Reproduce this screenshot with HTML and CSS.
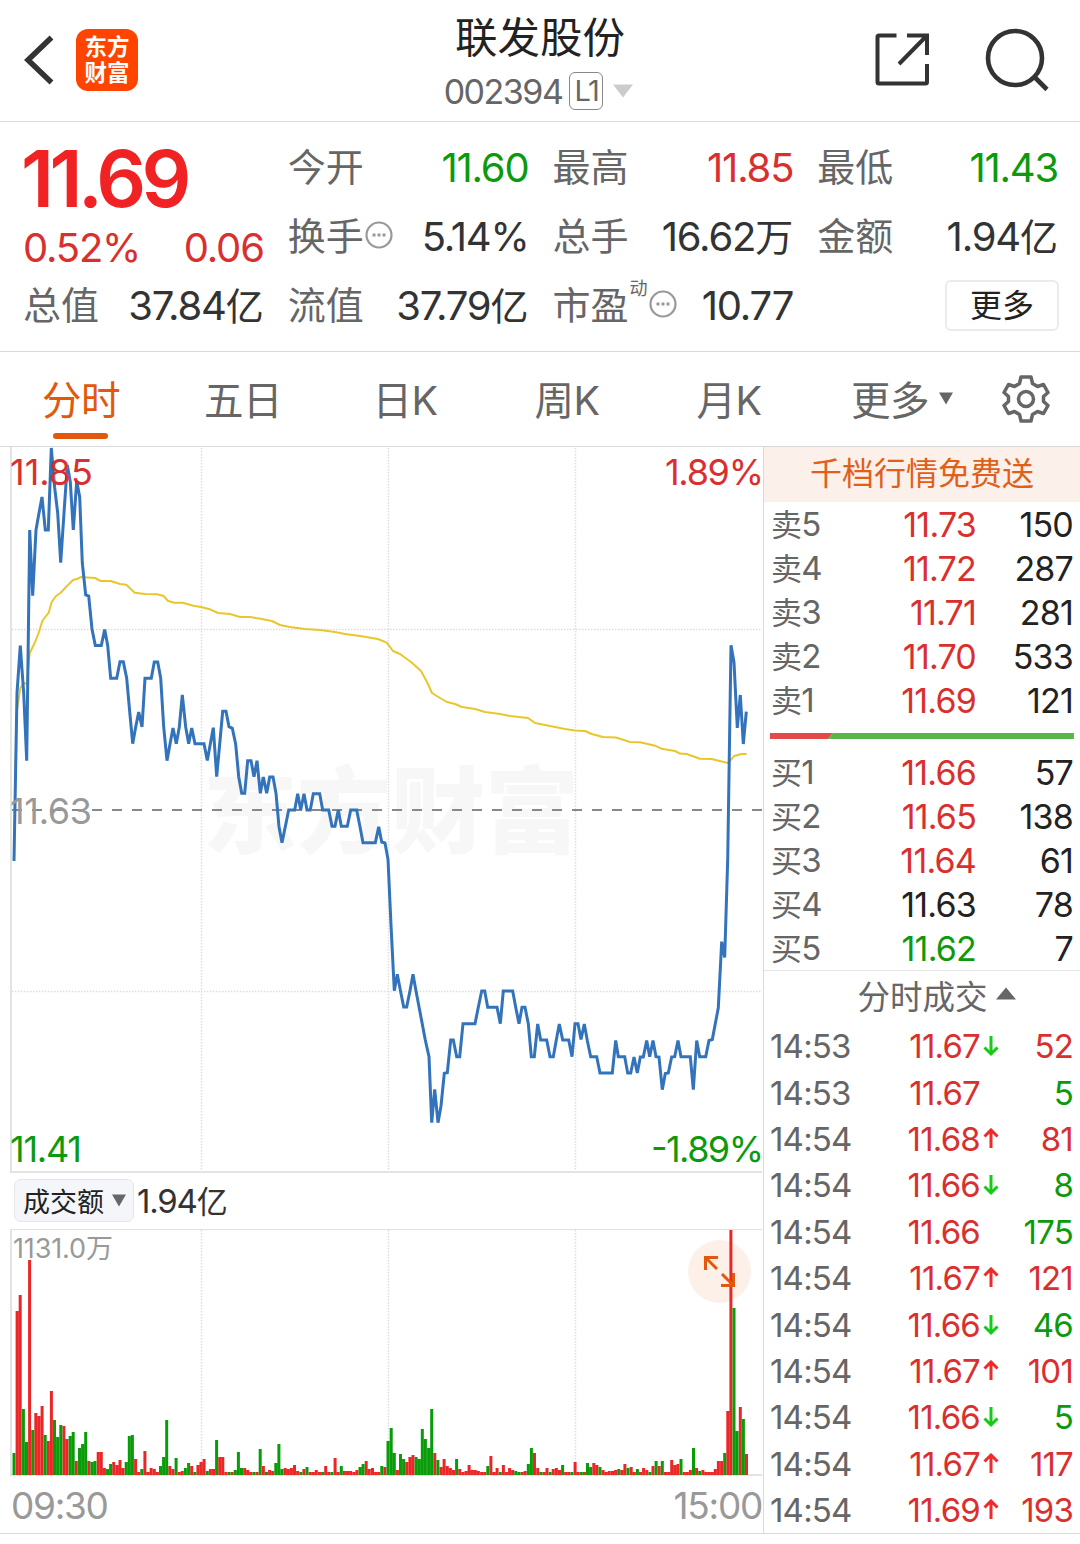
FILE: index.html
```html
<!DOCTYPE html>
<html lang="zh-CN">
<head>
<meta charset="utf-8">
<title>联发股份 002394</title>
<link rel="stylesheet" href="styles.css">
</head>
<body>
<header class="topbar">
  <div class="side">
    <svg class="back" width="34" height="52" viewBox="0 0 34 52"><path d="M28.500 3.500 5 26 28.500 48.500" fill="none" stroke="#333" stroke-width="5.500"/></svg>
    <div class="logo"><span>东方</span><span>财富</span></div>
  </div>
  <div class="heading">
    <h1>联发股份</h1>
    <div class="code"><span class="num">002394</span><span class="level">L1</span><svg width="20" height="14" viewBox="0 0 20 14"><path d="M0 0.500H20L10 13.500Z" fill="#ccc"/></svg></div>
  </div>
  <div class="side actions">
    <svg width="56" height="56" viewBox="0 0 56 56"><g fill="none" stroke="#333" stroke-width="4"><path d="M22.500 4.500H5Q3.500 4.500 3.500 6V51Q3.500 52.500 5 52.500H51.500Q53 52.500 53 51V33"/><path d="M33 4.500H53V24M53 4.500 25 33"/></g></svg>
    <svg width="66" height="66" viewBox="0 0 66 66"><g fill="none" stroke="#333" stroke-width="4.600"><circle cx="32" cy="32" r="27"/><path d="M51 50.500 64 63.500"/></g></svg>
  </div>
</header>

<section class="quote">
  <div class="price up">11.69</div>
  <div class="change up"><span>0.52%</span><span>0.06</span></div>
  <div class="cell a"><label>今开</label><b class="down">11.60</b></div>
  <div class="cell b"><label>最高</label><b class="up">11.85</b></div>
  <div class="cell c"><label>最低</label><b class="down">11.43</b></div>
  <div class="cell a r2"><label>换手</label><svg class="dots" width="28" height="30" viewBox="0 0 28 30"><circle cx="14" cy="15" r="12.500"/><path d="M7.500 15h3M12.500 15h3M17.500 15h3"/></svg><b class="wide">5.14%</b></div>
  <div class="cell b r2"><label>总手</label><b>16.62<i>万</i></b></div>
  <div class="cell c r2"><label>金额</label><b>1.94<i>亿</i></b></div>
  <div class="cell z r3"><label>总值</label><b>37.84<i>亿</i></b></div>
  <div class="cell a r3"><label>流值</label><b>37.79<i>亿</i></b></div>
  <div class="cell b r3"><label>市盈</label><sup>动</sup><svg class="dots" width="28" height="30" viewBox="0 0 28 30"><circle cx="14" cy="15" r="12.500"/><path d="M7.500 15h3M12.500 15h3M17.500 15h3"/></svg><b>10.77</b></div>
  <div class="cell c r3"><button class="more">更多</button></div>
</section>

<nav class="tabs">
  <a class="active">分时</a><a>五日</a><a>日K</a><a>周K</a><a>月K</a>
  <a class="drop">更多<svg width="14" height="13" viewBox="0 0 14 13"><path d="M0 0.500H14L7 12.500Z" fill="#666"/></svg></a>
  <a class="gear"><svg width="50" height="50" viewBox="0 0 50 50"><g fill="none" stroke="#666" stroke-width="3.500" stroke-linejoin="round"><path d="M20 3H30L31.500 9.500 36.500 12.500 42.500 10.500 47 18.500 42.500 22.500V27.500L47 31.500 42.500 39.500 36.500 37.500 31.500 40.500 30 47H20L18.500 40.500 13.500 37.500 7.500 39.500 3 31.500 7.500 27.500V22.500L3 18.500 7.500 10.500 13.500 12.500 18.500 9.500Z"/><circle cx="25" cy="25" r="7.500"/></g></svg></a>
</nav>

<main class="body">
  <section class="charts">
    <svg class="intraday" width="763" height="726" viewBox="0 447 763 726">
      <text class="mark" x="203" y="846" textLength="376" lengthAdjust="spacingAndGlyphs">东方财富</text>
      <g class="grid"><path d="M201.500 448V1171M388.500 448V1171M575.500 448V1171M12 629.500H762M12 991.500H762"/></g>
      <path class="frame" d="M11 447V1172H762"/>
      <path class="prev" d="M12 810H762"/>
      <polyline class="avg" points="14,858 15.500,770 17,710 20.300,688 23.700,683 26.700,684 29.700,653 34.700,643 39,632 42.300,621 45.300,617 48.700,612.700 51.700,602 56,596 60.700,592.700 67,586 73,580 77.700,578.700 81,577 95,578 100.700,581 110.700,581 120,584 126.300,584.700 134.700,592.700 145,594 157.300,594.300 163.700,596 167.700,600.700 174,602.700 182.700,602.700 193.300,605.700 201,607 210,609.300 218,613 230,614 240,617 250,617 262,619 272,621 280,625 290,627 305,629 320,630 335,632 345,634 360,636 378,639 386.700,642.700 393,651 400,654 411,662 421,671 427,682 432,693 440,698 447,702 455,704 462,707 475,709 485,712 500,714 510,716 528,718 535,723 555,727 565,729 575,730.600 585,731 591.700,734 603,737 616,737.500 630,742 640,742.300 655,745.700 661.700,748.800 675,751 680,753.600 686.700,754 700,758.800 711.700,759 727.700,763 731,759.800 734,756 741.700,754 746.500,754"/>
      <polyline class="line" points="14,861 17,693 20.300,645.500 23.700,693 26.700,760.700 29.700,530 32.700,595.700 36,530 39,513 42,497 45.300,530 48.300,530 51.300,448 54.700,488 57.700,513 60.700,562.700 64,513 67.300,465 70.300,482 73.300,530 76.700,481 79.700,497 82.300,563 85.700,595 88.700,596 92,629 95.300,645.500 101.300,645.500 104.700,629.500 107.700,645.500 110.700,678.300 116.700,678.300 120,661.700 123.300,661.700 126.700,678.300 129.700,711.700 132.700,743.700 135.700,727 138.700,712 142,727 145,678.300 151.300,678.300 154.300,662 157.700,662 160.700,678.300 163.700,727 167,760.700 170,744 173,728 176.300,743.700 179.300,727 182.300,695 185.700,727 188.700,743.700 191.700,728 195,743.700 204,743.700 207.300,760.500 210.300,744 213.300,727.700 216.700,776.700 219.700,744 222.700,711.300 226,711.300 229,726.700 232.300,728.300 235.700,744.300 238.700,776.700 241.700,793.300 244.700,793.300 247.700,760.700 251,760.700 254,776.700 257,760.700 260.300,793.300 263.300,777 266.700,793.300 269.700,777 273,777 276,793.300 279,826.700 282,842.700 285.300,826.700 288.700,810 294.700,810 297.700,793.700 300.700,810 304,793.700 307,810 310.300,810 313.300,793.700 319.700,793.700 322.700,810 328.700,810 332,826.300 335,826.300 338.300,810 341.300,826.300 347.300,826.300 350.700,810 356.700,810 360,826.700 363,842.700 375.300,842.700 378.700,826.700 381.700,842 385,843 388,859.300 391,925 394.300,990.700 397.300,974.300 400.500,991 403.700,1007 406.700,1007 410,990.700 413,974.300 416,991 419,1006.700 425.300,1040 429,1056.700 431.700,1122.700 434.700,1089.300 438,1122.700 441,1106 444.300,1073.300 447.300,1072.700 450.700,1040 453.300,1040 456.700,1056.700 459.700,1056.700 463,1023.700 475,1023.700 478.300,1007.300 481.700,991 484.700,991 487.700,1007.300 497,1007.300 500.300,1023.700 503.300,991 512.700,991 515.700,1007.300 519,1023.700 522,1007.300 525,1007.300 528.300,1023.700 531.300,1056.700 534.300,1056.700 537.700,1024 540.700,1040 546.700,1040 550,1056.700 553.300,1056.700 556.300,1040 559.300,1024 562.700,1040 568.700,1040 572,1056.700 575,1023.700 578,1023.700 581,1039.500 584.300,1024 587.300,1040.500 590.700,1056.700 596.700,1056.700 600,1073 612.300,1073 615.700,1040.500 618.300,1056.700 624.700,1056.700 627.700,1073 630.700,1073 634,1057 637.300,1073 640.300,1057 643.300,1057 646.700,1040.500 649.700,1056.700 653,1040.500 656,1056.700 659,1057 662.300,1089.700 665.300,1073.500 668.300,1073 671.700,1057 674.700,1056.700 678,1040.500 681,1056.700 690.300,1056.700 693.300,1089.700 696.700,1040.500 699.700,1056.700 705.700,1056.700 709,1040.500 712.300,1039.500 718.300,1007.800 721.700,941.700 724.700,957.500 727.700,859.400 731,645.200 734,662.400 737.300,727.800 740.300,695 743.300,744 746.300,711.600"/>
      <g class="axis">
        <text x="10" y="485" textLength="83" class="t-up">11.85</text>
        <text x="665" y="485" textLength="99" class="t-up">1.89%</text>
        <text x="10" y="824" textLength="82" class="t-mute">11.63</text>
        <text x="10" y="1162" textLength="72" class="t-down">11.41</text>
        <text x="651" y="1162" textLength="113" class="t-down">-1.89%</text>
      </g>
    </svg>
    <div class="indicator"><button class="pick">成交额<svg width="14" height="13" viewBox="0 0 14 13"><path d="M0 0.500H14L7 12.500Z" fill="#666"/></svg></button><b>1.94<i>亿</i></b></div>
    <div class="volume">
      <svg width="763" height="248" viewBox="0 1229 763 248">
        <g class="grid"><path d="M201.500 1230V1474M388.500 1230V1474M575.500 1230V1474"/></g>
        <path d="M11 1229.500H762" stroke="#e0e0e0"/>
        <path class="frame" d="M11 1229V1475H762"/>
        <text x="13" y="1258" class="vmax" textLength="100">1131.0万</text>
        <circle cx="719.500" cy="1271.500" r="31.500" fill="#fdf0e9"/>
        <path id="vol-up" fill="#eb2627"/>
        <path id="vol-down" fill="#089c08"/>
        <path d="M705.500 1270V1257.500H718M705.500 1257.500 717 1269M733.500 1273V1285.500H721M733.500 1285.500 722 1274" fill="none" stroke="#e2580c" stroke-width="3"/>
      </svg>
    </div>
    <div class="times"><span>09:30</span><span>15:00</span></div>
  </section>

  <aside class="depth">
    <div class="promo">千档行情免费送</div>
    <div class="book">
      <div><label>卖<s>5</s></label><b class="up">11.73</b><b>150</b></div>
      <div><label>卖<s>4</s></label><b class="up">11.72</b><b>287</b></div>
      <div><label>卖<s>3</s></label><b class="up">11.71</b><b>281</b></div>
      <div><label>卖<s>2</s></label><b class="up">11.70</b><b>533</b></div>
      <div><label>卖<s>1</s></label><b class="up">11.69</b><b>121</b></div>
    </div>
    <svg class="ratio" width="304" height="6" viewBox="0 0 304 6"><path d="M0 0H63L58 6H0Z" fill="#e14a48"/><path d="M63 0H304V6H58Z" fill="#5ab548"/></svg>
    <div class="book">
      <div><label>买<s>1</s></label><b class="up">11.66</b><b>57</b></div>
      <div><label>买<s>2</s></label><b class="up">11.65</b><b>138</b></div>
      <div><label>买<s>3</s></label><b class="up">11.64</b><b>61</b></div>
      <div><label>买<s>4</s></label><b>11.63</b><b>78</b></div>
      <div><label>买<s>5</s></label><b class="down">11.62</b><b>7</b></div>
    </div>
    <div class="ticks-title">分时成交<svg width="20" height="13" viewBox="0 0 20 13"><path d="M0 12.500H20L10 0.500Z" fill="#666"/></svg></div>
    <div class="ticks" id="ticks"></div>
  </aside>
</main>
<script src="app.js"></script>
</body>
</html>
```
FILE: styles.css
```css
* { box-sizing: border-box; }
body {
  margin: 0; width: 1080px; height: 1544px; background: #fff; color: #333; overflow: hidden;
  font-family: Inter, "Noto Sans CJK SC", sans-serif; font-weight: 400;
}
b, i, s, h1 { font-weight: 400; font-style: normal; text-decoration: none; margin: 0; }
i, s { line-height: 0; }
svg { display: block; flex: none; }
button { font: inherit; color: #222; margin: 0; }
.up { color: #d9302f; }
.down { color: #0c9a0c; }

.topbar { height: 122px; border-bottom: 1px solid #d9d9d9; display: grid; grid-template-columns: 300px 1fr 300px; }
.side { display: flex; align-items: center; height: 120px; padding-left: 23px; }
.logo {
  width: 62px; height: 62px; margin-left: 19px; border-radius: 12px; background: #ff4400; color: #fff;
  display: flex; flex-direction: column; align-items: center; justify-content: center; padding-bottom: 4px;
  font: 700 22.500px/26px "Noto Sans CJK SC", sans-serif;
}
.heading { display: flex; flex-direction: column; align-items: center; }
h1 { font-size: 42.500px; line-height: 60px; margin-top: 8px; color: #222; white-space: nowrap; }
.code { display: flex; align-items: center; height: 44px; margin-top: 1px; color: #666; font-size: 34px; margin-left: -3px; }
.num { letter-spacing: -1.500px; }
.level { border: 1.500px solid #888; border-radius: 6px; width: 34px; height: 38px; margin: 0 10px 0 7px; font-size: 29px; line-height: 35px; letter-spacing: -1.500px; text-align: center; }
.actions { justify-content: flex-end; gap: 53px; padding: 0 31px 3px 0; }

.quote {
  height: 230px; border-bottom: 1px solid #d9d9d9; padding: 11px 22px 0 23px;
  display: grid; grid-template-columns: repeat(4, 1fr); grid-template-rows: repeat(3, 69px); column-gap: 24px;
}
.price { grid-area: 1 / 1; font-size: 78px; font-weight: 600; line-height: 92px; letter-spacing: -4.500px; color: #f12223; margin-left: -2px; }
.change { grid-area: 2 / 1; display: flex; justify-content: space-between; font-size: 40px; line-height: 92px; letter-spacing: -1.200px; }
.cell { display: flex; align-items: center; grid-row: 1; font-size: 40px; white-space: nowrap; min-width: 0; }
.cell label { font-size: 38px; line-height: 46px; color: #666; margin-bottom: 1px; }
.cell b { margin-left: auto; letter-spacing: -1.200px; line-height: 48px; }
.cell i { font-size: 38px; letter-spacing: 0; }
.r2 { grid-row: 2; }
.r3 { grid-row: 3; }
.z { grid-column: 1; }
.a { grid-column: 2; }
.b { grid-column: 3; }
.c { grid-column: 4; }
.dots { fill: none; stroke: #999; stroke-width: 2.200; margin-left: 1px; margin-top: -4px; }
.dots path { stroke-width: 3; }
sup { font-size: 18px; line-height: 20px; align-self: flex-start; margin-top: 8px; color: #666; margin-left: 1px; }
.cell sup + .dots { margin-left: 1px; }
.more { margin-left: auto; margin-right: -1px; width: 114px; height: 51px; padding: 0; border: 2px solid #ebebeb; border-radius: 6px; background: #fff; font-size: 32px; line-height: 44px; }

.tabs { height: 95px; border-bottom: 1px solid #d9d9d9; display: grid; grid-template-columns: repeat(5, 162px) 184px 1fr; font-size: 39.500px; color: #666; }
.tabs a { display: flex; align-items: center; justify-content: center; white-space: nowrap; position: relative; height: 90px; letter-spacing: -0.500px; }
.tabs .active { color: #e2580c; }
.tabs .active::after { content: ""; position: absolute; bottom: 3px; left: 53px; width: 55px; height: 6px; border-radius: 3px; background: #e2580c; }
.drop svg { margin-left: 10px; margin-top: 2px; }
.tabs .gear { justify-content: flex-start; padding-left: 7px; height: 94px; }

.body { display: grid; grid-template-columns: 763px 1fr; height: 1087px; border-bottom: 1px solid #d9d9d9; }
.grid path { fill: none; stroke: #ddd; stroke-width: 1.500; stroke-dasharray: 1.500 1.500; }
.frame { fill: none; stroke: #e3e3e3; stroke-width: 2; }
.prev { fill: none; stroke: #888; stroke-width: 2; stroke-dasharray: 10 10; }
.avg, .line { fill: none; stroke-linejoin: round; }
.avg { stroke: #e9c72c; stroke-width: 2; }
.line { stroke: #3373bb; stroke-width: 3; stroke-linejoin: miter; stroke-miterlimit: 1.500; }
.mark { font: 900 94px "Noto Sans CJK SC", sans-serif; fill: #f7f7f7; }
.axis text { font-size: 36px; }
.t-up { fill: #d9302f; }
.t-down { fill: #0c9a0c; }
.t-mute { fill: #999; }
.vmax { font-size: 27px; fill: #999; }
.indicator { height: 56px; display: flex; align-items: center; padding: 0 0 1px 14px; font-size: 33px; }
.indicator b { margin-left: 3px; letter-spacing: -1.200px; line-height: 40px; }
.indicator i { font-size: 31px; }
.pick { width: 120px; height: 43px; border: 1px solid #e4e6e9; border-radius: 7px; background: #f5f6f9; padding: 0 7px 0 8px; display: flex; align-items: center; justify-content: space-between; font-size: 27px; white-space: nowrap; }
.times { display: flex; justify-content: space-between; padding: 0 1px 0 11px; font-size: 37px; line-height: 57px; letter-spacing: -1.300px; color: #999; }

.depth { border-left: 1px solid #d9d9d9; }
.promo { height: 55px; background: #fcf0eb; color: #e0601a; font-size: 32px; line-height: 54px; text-align: center; }
.book { padding: 0 7px; font-size: 34px; color: #222; letter-spacing: -0.800px; }
.book > div { height: 44px; line-height: 44px; display: grid; grid-template-columns: 90px 115px 1fr; white-space: nowrap; }
.depth .book:nth-of-type(2) { padding-top: 1px; }
.book label { color: #666; font-size: 31px; line-height: 44px; }
.book s { font-size: 33px; }
.book b { text-align: right; }
.ratio { margin: 10px 0 12px 6px; }
.ticks-title { border-top: 1px solid #e6e6e6; height: 53px; display: flex; align-items: center; justify-content: center; font-size: 32.500px; color: #666; margin-top: -1px; gap: 8px; padding: 0 0 6px 29px; }
.ticks-title svg { margin-top: -1px; }
.ticks { padding: 0 7px 0 6px; font-size: 33px; letter-spacing: -0.800px; }
.ticks > div { display: grid; grid-template-columns: 90px 120px 20px 1fr; align-items: center; height: 46.400px; white-space: nowrap; }
.ticks b { text-align: right; }
.ticks span { color: #666; }
.ticks svg { width: 18px; height: 22px; margin-left: 2px; fill: none; stroke-width: 3; }
.ticks .rise { stroke: #ee2a2a; }
.ticks .fall { stroke: #14cc14; }
```
FILE: app.js
```js
// Turnover per minute: direction (r = up, g = down) and bar height in px.
const turnover = `g22 r164 r180 g66 g33 r215 g45 r62 r59 r69 g40 r34 r84 g55 g38 g50 r49 r36 g39 g43
r14 g27 g31 g43 r14 g13 g14 r23 r23 r7 g6 g11 r13 r10 r15 r7 g13 g39 g40 r16
r3 g6 r24 r3 r7 r6 r3 g9 g18 g55 r9 r6 g17 r3 r4 g7 g12 r9 g3 r10
r13 r16 g4 r6 r6 g35 r18 r18 r3 g3 r3 g5 g23 g7 r7 r5 r3 g3 r3 g26
r9 g3 r5 r4 g12 g31 g6 r7 r6 r7 r10 r4 g3 r6 g8 r3 r3 r5 r3 g3
r9 r3 g3 r17 r3 g9 r4 r4 r4 r3 r5 g8 g11 r14 r6 r7 r3 r3 g9 r8
g34 g47 g22 r5 g21 g16 r13 r18 r20 g18 g16 g46 g36 g27 g66 r22 g15 r8 r16 r9
r7 r5 g16 r6 r3 r4 r10 r5 r5 r4 r3 r3 g9 r19 r3 r7 g3 r10 r3 r7
r5 g4 g3 r3 r4 g11 g27 r22 r7 g3 r3 r7 g3 r6 r7 r5 g10 r3 r3 g3
r13 r3 g3 r3 g12 g8 r12 r10 g8 r5 r3 r4 r4 r5 g6 r5 r11 g7 r8 r3
g6 r3 r7 r5 g3 r9 g14 r9 g14 r3 r3 r15 r10 r11 g16 r3 r3 r5 g27 r7
g4 r5 r3 r3 r3 r6 r14 r14 g22 r64 r245 g167 g44 r68 g56 r21`.split(/\s+/);
const bars = { r: "", g: "" };
turnover.forEach((item, i) => {
  const x = (12.5 + i * 3.117).toFixed(1);
  bars[item[0]] += `M${x} 1475V${1475 - item.slice(1)}h3V1475Z`;
});
document.getElementById("vol-up").setAttribute("d", bars.r);
document.getElementById("vol-down").setAttribute("d", bars.g);

// time, price, tick direction, lots, side
const trades = [
  ["14:53", "11.67", "fall", 52, "up"], ["14:53", "11.67", "", 5, "down"],
  ["14:54", "11.68", "rise", 81, "up"], ["14:54", "11.66", "fall", 8, "down"],
  ["14:54", "11.66", "", 175, "down"], ["14:54", "11.67", "rise", 121, "up"],
  ["14:54", "11.66", "fall", 46, "down"], ["14:54", "11.67", "rise", 101, "up"],
  ["14:54", "11.66", "fall", 5, "down"], ["14:54", "11.67", "rise", 117, "up"],
  ["14:54", "11.69", "rise", 193, "up"]
];
const arrows = { rise: "M9 20V2M2.500 8.500 9 2 15.500 8.500", fall: "M9 1V19M2.500 12.500 9 19 15.500 12.500", "": "" };
document.getElementById("ticks").innerHTML = trades.map(([time, price, dir, lots, side]) =>
  `<div><span>${time}</span><b class="up">${price}</b><svg class="${dir}" viewBox="0 0 18 22"><path d="${arrows[dir]}"/></svg><b class="${side}">${lots}</b></div>`
).join("");
```
